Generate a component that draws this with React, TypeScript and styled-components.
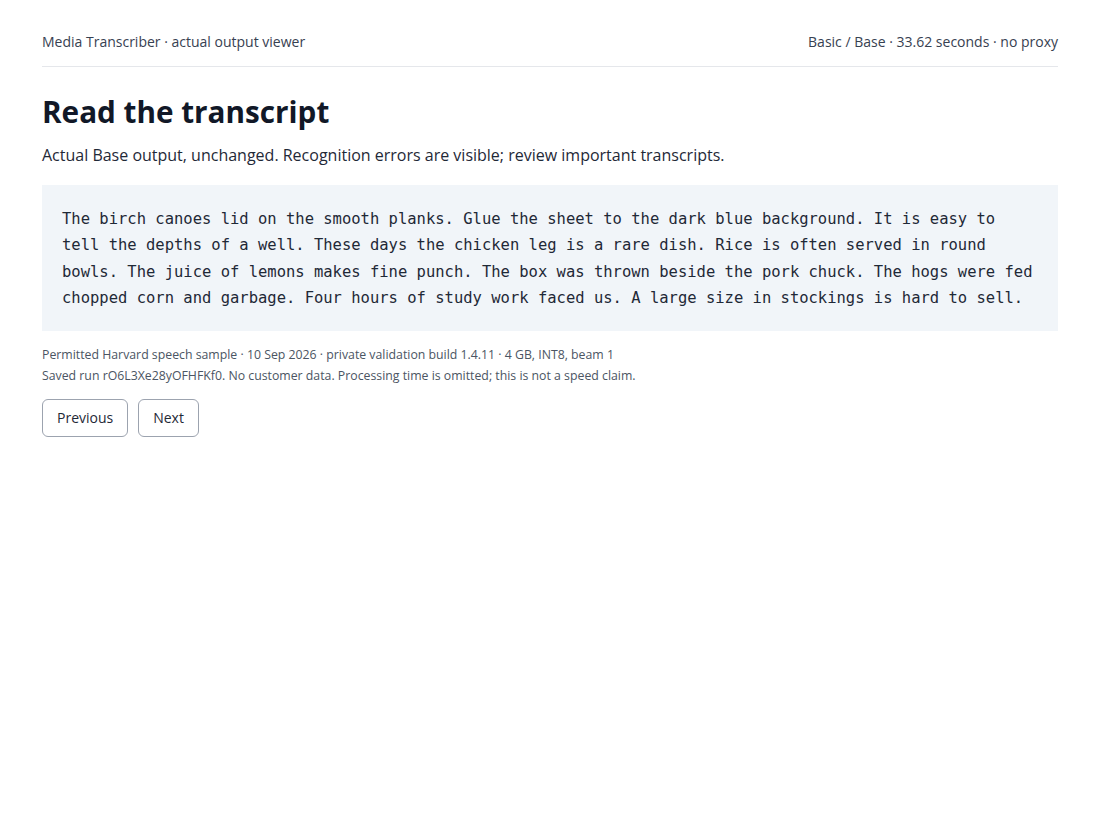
import styled, { createGlobalStyle } from "styled-components";

const GlobalStyle = createGlobalStyle`
  body {
    margin: 0;
    background: #ffffff;
    font-family: "Open Sans", "Noto Sans", Arial, sans-serif;
    color: #1f2937;
  }
`;

const Page = styled.div`
  padding: 31px 42px 40px;
`;

const TopBar = styled.header`
  display: flex;
  justify-content: space-between;
  align-items: center;
  padding-bottom: 14px;
  border-bottom: 1px solid #e5e7eb;
  font-size: 14px;
  line-height: 21px;
  color: #374151;
`;

const Title = styled.h1`
  margin: 26px 0 0;
  font-size: 29.7px;
  line-height: 38px;
  font-weight: 700;
  color: #111827;
`;

const Lead = styled.p`
  margin: 12px 0 0;
  font-size: 16px;
  line-height: 24px;
  color: #1f2937;
`;

const Transcript = styled.pre`
  margin: 18px 0 0;
  padding: 21px 20px 19px;
  background: #f1f5f9;
  font-family: "DejaVu Sans Mono", "Liberation Mono", monospace;
  font-size: 15.5px;
  line-height: 26.4px;
  color: #1f2937;
  white-space: pre-wrap;
  word-break: normal;
`;

const Meta = styled.div`
  margin-top: 13px;
  font-size: 12.3px;
  line-height: 21px;
  color: #4b5563;
`;

const Actions = styled.div`
  display: flex;
  gap: 10px;
  margin-top: 13px;
`;

const Button = styled.button`
  height: 38px;
  padding: 0 14px;
  border: 1px solid #9ca3af;
  border-radius: 6px;
  background: #ffffff;
  font-family: inherit;
  font-size: 14px;
  color: #1f2937;
  cursor: pointer;
`;

const transcript =
  "The birch canoes lid on the smooth planks. Glue the sheet to the dark blue background. It is easy to tell the depths of a well. These days the chicken leg is a rare dish. Rice is often served in round bowls. The juice of lemons makes fine punch. The box was thrown beside the pork chuck. The hogs were fed chopped corn and garbage. Four hours of study work faced us. A large size in stockings is hard to sell.";

export default function App() {
  return (
    <>
      <GlobalStyle />
      <Page>
        <TopBar>
          <span>Media Transcriber · actual output viewer</span>
          <span>Basic / Base · 33.62 seconds · no proxy</span>
        </TopBar>
        <Title>Read the transcript</Title>
        <Lead>
          Actual Base output, unchanged. Recognition errors are visible; review important
          transcripts.
        </Lead>
        <Transcript>{transcript}</Transcript>
        <Meta>
          <div>
            Permitted Harvard speech sample · 10 Sep 2026 · private validation build 1.4.11 · 4
            GB, INT8, beam 1
          </div>
          <div>
            Saved run rO6L3Xe28yOFHFKf0. No customer data. Processing time is omitted; this is not
            a speed claim.
          </div>
        </Meta>
        <Actions>
          <Button>Previous</Button>
          <Button>Next</Button>
        </Actions>
      </Page>
    </>
  );
}
